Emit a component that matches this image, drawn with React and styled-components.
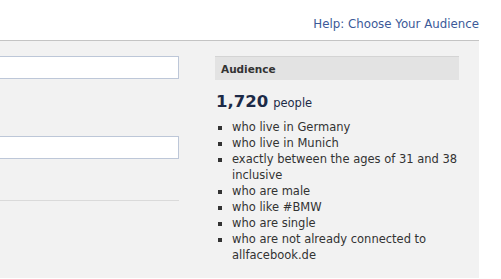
import styled, { createGlobalStyle } from 'styled-components';

const Global = createGlobalStyle`
  html, body {
    margin: 0;
    padding: 0;
    background: #fff;
    overflow: hidden;
  }
  body {
    font-family: "DejaVu Sans", "Liberation Sans", sans-serif;
    color: #333;
  }
`;

const Page = styled.div`
  width: 479px;
`;

const TopBar = styled.div`
  height: 40px;
  display: flex;
  align-items: flex-end;
  justify-content: flex-end;
  box-sizing: border-box;
  padding-bottom: 9px;
`;

const HelpLink = styled.a`
  color: #3b5998;
  font-size: 11.8px;
  text-decoration: none;
  cursor: pointer;
`;

const Panel = styled.div`
  background: #f2f2f2;
  border-top: 1px solid #c4c4c4;
  height: 238px;
  display: flex;
  gap: 36px;
  padding-top: 15px;
  box-sizing: border-box;
`;

const FormCol = styled.div`
  width: 200px;
  margin-left: -21px;
  display: flex;
  flex-direction: column;
`;

const Field = styled.input`
  height: 23px;
  box-sizing: border-box;
  border: 1px solid #bdc7d8;
  background: #fff;
  margin-bottom: ${p => p.$gap || 0}px;
`;

const Rule = styled.div`
  height: 1px;
  background: #dadada;
`;

const AudienceCol = styled.div`
  width: 244px;
`;

const Header = styled.div`
  height: 24px;
  background: #e3e3e3;
  border-top: 1px solid #d4d4d4;
  box-sizing: border-box;
  padding-left: 6px;
  display: flex;
  align-items: center;
  font-size: 10.5px;
  font-weight: bold;
  color: #333;
`;

const Count = styled.div`
  margin-top: 12px;
  padding-left: 1px;
  color: #1c2a47;
  display: flex;
  align-items: baseline;
  gap: 5px;
`;

const Number = styled.span`
  font-size: 16.5px;
  font-weight: bold;
`;

const Unit = styled.span`
  font-size: 11.5px;
`;

const List = styled.ul`
  margin: 8px -6px 0 0;
  padding: 0 0 0 17px;
  list-style: square;
  font-size: 11.5px;
  line-height: 16px;
  color: #333;
`;

const criteria = [
  'who live in Germany',
  'who live in Munich',
  'exactly between the ages of 31 and 38 inclusive',
  'who are male',
  'who like #BMW',
  'who are single',
  'who are not already connected to allfacebook.de',
];

export default function App() {
  return (
    <Page>
      <Global />
      <TopBar>
        <HelpLink>Help: Choose Your Audience</HelpLink>
      </TopBar>
      <Panel>
        <FormCol>
          <Field $gap={57} />
          <Field $gap={41} />
          <Rule />
        </FormCol>
        <AudienceCol>
          <Header>Audience</Header>
          <Count>
            <Number>1,720</Number>
            <Unit>people</Unit>
          </Count>
          <List>
            {criteria.map(c => <li key={c}>{c}</li>)}
          </List>
        </AudienceCol>
      </Panel>
    </Page>
  );
}
